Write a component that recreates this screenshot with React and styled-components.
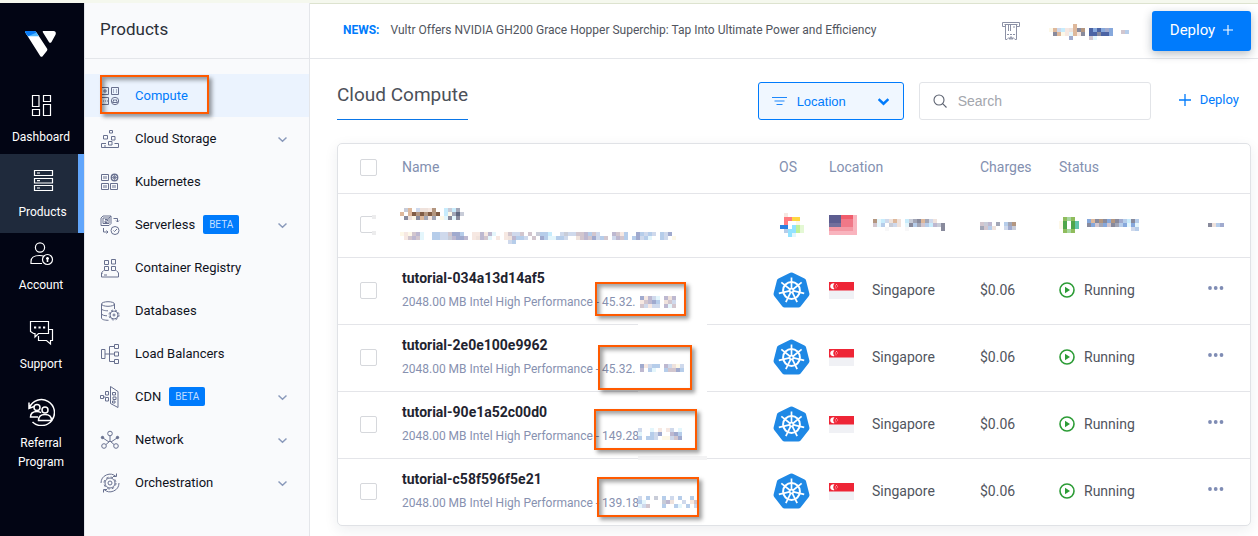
import React from "react";
import styled, { createGlobalStyle, css } from "styled-components";

const GlobalStyle = createGlobalStyle`
  *, *::before, *::after { box-sizing: border-box; }
  body {
    margin: 0;
    background: #fff;
    color: #51555e;
    font-family: Roboto, "Liberation Sans", sans-serif;
    font-size: 14px;
  }
  button, input, select { font-family: inherit; }
  a { text-decoration: none; }
`;

/* ---------- shell ---------- */

const Page = styled.div`
  display: grid;
  grid-template-columns: 84px 226px minmax(0, 1fr);
  min-height: 100vh;
  border-top: 3px solid #f5f8ee;
  box-shadow: inset 0 1px 0 #dde3cf;
`;

const Rail = styled.nav`
  background: #020514;
  color: #fff;
`;

const Logo = styled.a`
  display: flex;
  justify-content: center;
  height: 82px;
  padding: 28px 4px 0 0;
`;

const RailItem = styled.a`
  display: flex;
  flex-direction: column;
  align-items: center;
  gap: 8px;
  min-height: 69px;
  margin-bottom: 10px;
  padding: 7px 2px 0 0;
  color: #fff;
  font-size: 12px;
  line-height: 19px;
  text-align: center;

  ${(p) =>
    p.$active &&
    css`
      min-height: 79px;
      margin-top: -10px;
      margin-bottom: 0;
      padding: 13px 0 0 7px;
      background: #1f2a3c;
      border-right: 6px solid #61a5fb;
    `}
`;

const Sidebar = styled.aside`
  background: #f9fafc;
  border-left: 1px solid #e4e6ea;
  border-right: 1px solid #e4e6ea;
`;

const SidebarTitle = styled.h2`
  height: 56px;
  margin: 0 0 15px;
  padding: 14px 15px 0;
  border-bottom: 1px solid #e4e6ea;
  color: #2b2f38;
  font-size: 17px;
  font-weight: 400;
  line-height: 24px;
`;

const MenuItem = styled.a`
  position: relative;
  display: flex;
  align-items: center;
  height: 43px;
  padding: 0 22px 0 15px;
  background: ${(p) => (p.$active ? "#ebf3fe" : "transparent")};
  color: ${(p) => (p.$active ? "#007bfc" : "#10131c")};
  font-size: 13px;
  line-height: 20px;
`;

const MenuIcon = styled.span`
  display: flex;
  margin-right: 15px;
`;

const MenuArrow = styled.span`
  display: flex;
  margin-left: auto;
  padding-top: 2px;
`;

const Beta = styled.span`
  margin-left: 8px;
  padding: 0 6px;
  border-radius: 2px;
  background: #007bfc;
  color: #c4dfff;
  font-size: 10px;
  line-height: 19px;
`;

const Main = styled.main`
  min-width: 0;
`;

const Header = styled.header`
  display: flex;
  align-items: center;
  height: 56px;
  padding: 0 7px 0 33px;
  border-bottom: 1px solid #e4e6ea;
`;

const News = styled.p`
  flex: 1;
  margin: 0;
  padding-bottom: 2px;
  font-size: 12px;
  line-height: 20px;

  strong { margin-right: 11px; color: #007bfc; font-weight: 700; }
`;

const Account = styled.button`
  display: flex;
  align-items: center;
  gap: 8px;
  margin: 0 23px 0 29px;
  padding: 3px 0 0;
  border: 0;
  background: none;
`;

const PrimaryButton = styled.button`
  display: flex;
  align-items: center;
  justify-content: center;
  gap: 8px;
  width: 99px;
  height: 40px;
  padding: 0 0 2px;
  border: 0;
  border-radius: 3px;
  background: #007bfc;
  box-shadow: 0 3px 10px rgba(20, 40, 60, 0.3);
  color: #fff;
  font-size: 15px;
`;

const Content = styled.section`
  padding: 23px 7px 10px 27px;
`;

const Toolbar = styled.div`
  display: flex;
  align-items: center;
  gap: 15px;
  margin-bottom: 23px;
`;

const PageTitle = styled.h1`
  height: 38px;
  margin: 0 auto 0 0;
  border-bottom: 1px solid #0a76e8;
  color: #4b5059;
  font-size: 19px;
  font-weight: 400;
  line-height: 26px;
`;

const Field = styled.label`
  display: flex;
  align-items: center;
  gap: ${(p) => (p.$active ? "10px" : "11px")};
  width: ${(p) => (p.$active ? "146px" : "232px")};
  height: 38px;
  padding: 0 14px 0 13px;
  border: 1px solid ${(p) => (p.$active ? "#007bfc" : "#e2e4e8")};
  border-radius: 3px;
  background: ${(p) => (p.$active ? "#f0f7ff" : "#fff")};
  svg { flex: none; }
`;

const LocationSelect = styled.select`
  flex: 1;
  min-width: 0;
  padding: 0;
  border: 0;
  outline: 0;
  appearance: none;
  background: none;
  color: #007bfc;
  font-family: "Liberation Sans", Arial, sans-serif;
  font-size: 13px;
`;

const SearchInput = styled.input`
  flex: 1;
  min-width: 0;
  padding: 0;
  border: 0;
  outline: 0;
  background: none;
  font-family: "Liberation Sans", Arial, sans-serif;
  font-size: 14px;
  &::placeholder { color: #a3a6ad; }
`;

const DeployLink = styled.a`
  display: flex;
  align-items: center;
  gap: 9px;
  padding: 0 12px 3px 13px;
  color: #007bfc;
  font-size: 13px;
`;

/* ---------- instance table ---------- */

const Card = styled.div`
  border: 1px solid #e0e2e6;
  border-radius: 5px;
  background: #fff;
  box-shadow: 0 4px 14px rgba(30, 40, 60, 0.08);
`;

const Table = styled.table`
  width: 100%;
  table-layout: fixed;
  border-spacing: 0;

  th, td {
    height: 67px;
    padding: 0 0 2px;
    border-bottom: 1px solid #e4e5e9;
    text-align: left;
    vertical-align: middle;
  }
  th { height: 50px; padding-bottom: 3px; color: #8390b0; font-weight: 400; }
  tbody tr:first-child td { height: 64px; }
  tbody tr:last-child td { height: 66px; border-bottom: 0; }
`;

const Col = styled.col`
  width: ${(p) => p.$w};
`;

const OsHead = styled.span`
  padding-left: 9px;
`;

const CheckWrap = styled.span`
  position: relative;
  display: block;
  width: 17px;
  height: 17px;
  margin-left: 22px;
`;

const Checkbox = styled.input.attrs({ type: "checkbox" })`
  display: block;
  width: 17px;
  height: 17px;
  margin: 0;
  appearance: none;
  border: 1px solid #d6d8dc;
  border-radius: 2px;
  background: #fff;
`;

const NameCell = styled.div`
  position: relative;
  display: flex;
  flex-direction: column;
  gap: ${(p) => (p.$hidden ? "12px" : "4px")};
  height: ${(p) => (p.$hidden ? "61px" : "64px")};
  margin-left: ${(p) => (p.$hidden ? "-2px" : "0")};
  padding-top: ${(p) => (p.$hidden ? "14px" : "10px")};
  line-height: 20px;
`;

const ServerName = styled.a`
  color: #1f2430;
  font-weight: 700;
`;

const Spec = styled.span`
  color: #8791b0;
  font-size: 12px;
  white-space: nowrap;
`;

const Inline = styled.div`
  display: flex;
  align-items: center;
  gap: ${(p) => p.$gap};
  padding-left: ${(p) => p.$indent || "0"};
`;

const MoreButton = styled.button`
  display: block;
  margin-left: 20px;
  padding: 0 0 ${(p) => (p.$low ? "5px" : "10px")};
  border: 0;
  background: none;
`;

/* Things laid over the page: redactions and call-out frames */

const Overlay = styled.span`
  position: absolute;
  left: ${(p) => p.$x}px;
  top: ${(p) => p.$y}px;
  display: flex;
`;

const Callout = styled.span`
  position: absolute;
  left: ${(p) => p.$x}px;
  top: ${(p) => p.$y}px;
  width: ${(p) => p.$w}px;
  height: ${(p) => p.$h}px;
  border: 2px solid #ff5a00;
  box-shadow: 3px 3px 4px rgba(0, 0, 0, 0.38), inset 3px 3px 4px rgba(0, 0, 0, 0.38);
  pointer-events: none;
`;

const Wipe = styled.span`
  position: absolute;
  left: 236px;
  bottom: -4px;
  width: 69px;
  height: 4px;
  background: ${(p) => (p.$grey ? "#f3f3f4" : "#fff")};
`;

const PALETTE = {
  W: "#ffffff", a: "#c8ccd8", b: "#deb89b", c: "#cfd9ec", d: "#efe2dc", e: "#b39680",
  f: "#805c46", g: "#c8ecfc", h: "#888a9c", i: "#a2a6b6", j: "#fdf8e8", k: "#606880",
  l: "#bdb8d0", m: "#b6cdea", n: "#d2c6ce", o: "#a0aace", p: "#e4f6fc", q: "#f6e8e2",
  r: "#ff7a7f", s: "#ffd640", t: "#2a80e0", u: "#92e2ff", v: "#c0f098", w: "#e4f8d4",
  N: "#5d5d90", M: "#736f9c", R: "#f05d6c", S: "#f07888", T: "#f498a4", U: "#f9b4be",
  G: "#8fbc5c", H: "#4fa64a", I: "#62c4ac", J: "#a8d8a0", K: "#4c64a4", L: "#86a8dc",
  X: "#f7f7f8", Z: "#ececed",
};

function Pixels({ rows, label }) {
  const cols = Math.max(...rows.map((r) => r.length));
  return (
    <svg
      width={cols * 4}
      height={rows.length * 4}
      viewBox={`0 0 ${cols} ${rows.length}`}
      shapeRendering="crispEdges"
      role="img"
      aria-label={label || "hidden"}
    >
      {rows.flatMap((row, y) =>
        [...row].map((ch, x) =>
          PALETTE[ch] ? <rect key={`${x}-${y}`} x={x} y={y} width="1" height="1" fill={PALETTE[ch]} /> : null
        )
      )}
    </svg>
  );
}

/* ---------- drawings ---------- */

const RailSvg = ({ children }) => (
  <svg width="28" height="28" viewBox="0 0 28 28" fill="none" stroke="#fff" strokeWidth="1.2">
    {children}
  </svg>
);

const railIcons = {
  dashboard: (
    <RailSvg>
      <path d="M5.500 3.500h6.500v11h-6.500zM16.500 3.500h7v6h-7zM5.500 17.500h7v6h-7zM16.500 12.500h7v11h-7z" />
    </RailSvg>
  ),
  products: (
    <RailSvg>
      <path d="M5.500 3.500h18v5h-18zM5.500 11.500h18v4.500h-18zM5.500 18.500h18v5h-18z" />
      <path d="M8 6h3M8 13.700h3M8 21h3" />
    </RailSvg>
  ),
  account: (
    <RailSvg>
      <circle cx="13" cy="7.500" r="4.600" />
      <path d="M15 23.500H4v-2c0-4.500 4-6 8.500-6 2 0 3.500.3 4.500 1" />
      <circle cx="20.500" cy="19.500" r="5" />
      <path d="M20.500 17v5M19 18.500h3" strokeWidth="1.600" />
    </RailSvg>
  ),
  support: (
    <RailSvg>
      <path d="M3.500 2.500h18v12h-10l-3.500 3.500v-3.500h-1.500l-3-2z" />
      <path d="M21.500 10.500h4v11h-2v3.500l-4-3.500h-8v-4.500" />
      <path d="M7 8.500h2.200M11.500 8.500h2.200M16 8.500h2.200" strokeWidth="2.200" />
    </RailSvg>
  ),
  referral: (
    <RailSvg>
      <path d="M2.500 9.500a13 13 0 1 1 3 14.500M2 4.500v6l5-2" strokeWidth="1.500" />
      <circle cx="10" cy="9.500" r="3" strokeWidth="1.500" />
      <circle cx="18" cy="12" r="3" strokeWidth="1.500" />
      <path d="M11 19H3.500c0-4 2-5.500 6.500-5.500 2 0 3 .3 4 1.300M11.500 22.500c0-4.500 2-6 6.500-6s6.500 1.500 6.500 6z" strokeWidth="1.500" />
    </RailSvg>
  ),
};

const MenuSvg = ({ children }) => (
  <svg width="20" height="22" viewBox="0 0 20 22" fill="none" stroke="#68708f" strokeWidth="1">
    {children}
  </svg>
);

const menuIcons = {
  compute: (
    <MenuSvg>
      <path d="M1.500 2.500h7v7h-7zM11.500 2.500h7v7h-7zM1.500 12.500h7v7h-7z" />
      <path d="M4 5h2v2h-2zM3 16h1M5 16h1M7 16h1M13 5h1M16 5h1M13 7h1M16 7h1M12.500 17.500h5l-1.500-3-1 1-1-1z" />
      <circle cx="15" cy="16" r="3.700" />
    </MenuSvg>
  ),
  storage: (
    <MenuSvg>
      <path d="M9.500 2.500h3v2.500h-3zM3.500 7.500h4v3.500h-4zM11.500 8.500h3.500v3.500h-3.500zM8.500 13.500h3.500v3.500h-3.500zM6 15.500H1.500v4h17v-4H14.500M4 18h2" />
    </MenuSvg>
  ),
  kubernetes: (
    <MenuSvg>
      <path d="M1.500 3.500h7v6h-7zM1.500 12.500h7v6h-7zM10.500 12.500h7v6h-7zM4 5v3M6 5v3M4 14v3M6 14v3M13 14v3M15 14v3" />
      <circle cx="14.500" cy="6.500" r="3.200" strokeWidth="1.400" />
      <path d="M14.500 4v5M12 6.500h5M13 5l3 3M16 5l-3 3" strokeWidth=".8" />
    </MenuSvg>
  ),
  serverless: (
    <MenuSvg>
      <path d="M1 4l2-2h8v7.500l-2 2H1zM3 4v5.500h6V4zM9 4l2-2M5 5.500h2.500v1.500H5v1.500h2.500M13.500 4.500h4V8M16 6.500l1.500 1.500 1.500-1.500M3.500 14v4H8M6.500 16.500l1.500 1.500-1.500 1.500" />
      <circle cx="15" cy="16.500" r="4" />
      <path d="M13.500 16.500l1 1 2.500-2.500" />
    </MenuSvg>
  ),
  registry: (
    <MenuSvg>
      <path d="M4.500 3.500h4v4h-4zM11.500 2.500h4v4.500h-4zM4.500 9.500h4v4h-4zM11.500 9.500h4v4h-4zM3.500 13.500l-2 2.500v4h17v-4l-2-2.500M1.500 16.500h1M4 18h3" />
    </MenuSvg>
  ),
  databases: (
    <MenuSvg>
      <ellipse cx="8" cy="4" rx="6.500" ry="2.300" />
      <path d="M1.500 4v14c0 1.500 3 2.300 7 2.300M14.500 4v5M1.500 8.500c0 1.500 3 2.300 6.500 2.300M1.500 13.500c0 1.500 3 2.300 5.500 2.300" />
      <circle cx="14" cy="15" r="4" />
      <circle cx="14" cy="15" r="5" strokeDasharray="2 2" />
      <circle cx="14" cy="15" r="1" />
    </MenuSvg>
  ),
  balancers: (
    <MenuSvg>
      <path d="M1.500 6.500h3.500v9h-3.500zM5 11h10M14.500 3.500h-5v15h5M14.500 1.500h4v4h-4zM14.500 9h4v4h-4zM14.500 16.500h4v4h-4z" />
    </MenuSvg>
  ),
  cdn: (
    <MenuSvg>
      <path d="M10.500 0.500l7.500 5v16l-7.500-4zM.5 9.500h3v3h-3zM5.500 5.500h3v3.500h-3zM5.500 11.500h3v3.500h-3zM12.500 6.500h3v2.500h-3zM13 11h3v2.500h-3zM12.500 15h2.500v2h-2.500zM3.500 11h2" />
    </MenuSvg>
  ),
  network: (
    <MenuSvg>
      <circle cx="10" cy="4.500" r="2.300" />
      <circle cx="4" cy="17" r="2.300" />
      <circle cx="16" cy="17" r="2.300" />
      <circle cx="2.500" cy="8.500" r="1.200" fill="#68708f" />
      <circle cx="17.500" cy="8.500" r="1.200" fill="#68708f" />
      <path d="M10 7v5l-4 3.500M10 12l4 3.500M3 9l6 4M17 9l-6 4" />
    </MenuSvg>
  ),
  orchestration: (
    <MenuSvg>
      <circle cx="10" cy="11" r="5" />
      <circle cx="10" cy="11" r="6" strokeDasharray="2.500 2.200" />
      <circle cx="10" cy="11" r="2" />
      <path d="M1 11a9 9 0 0 1 15-6.500M13 4.500h3.500V1.500M19 11a9 9 0 0 1-15 6.500M7 17.500H3.500v3" />
    </MenuSvg>
  ),
};

const Chevron = ({ color = "#8a9abb", size = 9, weight = 1.5 }) => (
  <svg width={size} height={size} viewBox="0 0 9 9" fill="none" stroke={color} strokeWidth={weight}>
    <path d="M.5 2.500L4.500 6.300 8.500 2.500" />
  </svg>
);

const Plus = ({ size = 10, color = "currentColor" }) => (
  <svg width={size} height={size} viewBox="0 0 12 12" fill="none" stroke={color} strokeWidth="1.300">
    <path d="M6 0v12M0 6h12" />
  </svg>
);

const VultrLogo = () => (
  <svg width="31" height="26" viewBox="0 0 31 26">
    <path d="M0 0h9q1.500 0 2.500 1.500L22 17.500q.7 1 0 2.200L17.800 25q-1.300 1.700-2.600 0L.3 1.500Q-.3.400 0 0z" fill="#fff" />
    <path d="M0 0h9q1.500 0 2.500 1.500L14 5.200H3L.3 1.500Q-.3.400 0 0z" fill="#51b9ff" />
    <path d="M0 0h9q1.300 0 2 .8L11.500 1.500 3 5.200.3 1.500Q-.3.400 0 0z" fill="#0a7cf5" />
    <path d="M18 0h10.500q2.500 0 2.300 2.500 0 1-.7 2L26.500 11q-1.300 1.700-2.600 0L18 1.500Q17.300.5 18 0z" fill="#fff" />
  </svg>
);

const BillingIcon = () => (
  <svg width="18" height="18" viewBox="0 0 18 18" fill="none" stroke="#8c91a5" strokeWidth="1">
    <path d="M3.500 4.500H.5v-4h17v4H14.500M2.500 2.500h13M3.500 2.500v15h1.500l2-2 1 2M14.500 2.500v15h-1.500l-2-2-1 2M8 17.500l1-3 1 3M6.500 3v6M8.500 3v6" />
    <path d="M12 4v2M5 12.500h8" strokeDasharray="2 1" />
  </svg>
);

const FilterIcon = () => (
  <svg width="15" height="10" viewBox="0 0 15 10" fill="none" stroke="#1e88fb" strokeWidth="1">
    <path d="M0 1.500h15M2.500 5h10M4.500 8.500h6" />
  </svg>
);

const SearchIcon = () => (
  <svg width="14" height="14" viewBox="0 0 14 14" fill="none" stroke="#5c6270" strokeWidth="1.100">
    <circle cx="6" cy="6" r="5" />
    <path d="M9.600 9.600L13.500 13.500" />
  </svg>
);

const SPOKES = [0, 1, 2, 3, 4, 5, 6].map((i) => (i * 360) / 7);

const KubernetesLogo = () => (
  <svg width="37" height="36" viewBox="0 0 37 36" role="img" aria-label="Kubernetes">
    <path
      d="M17.200 .8q1.300-.6 2.600 0L31.500 6.400q1.300.6 1.600 2l3.300 13.100q.3 1.300-.6 2.400L27.600 34.500q-.9 1-2.200 1H11.600q-1.300 0-2.200-1L1.200 23.900q-.9-1.100-.6-2.400l3.300-13.100q.3-1.400 1.600-2z"
      fill="#1e88e5"
    />
    <g stroke="#fff" fill="none">
      <circle cx="18.500" cy="18.500" r="8.400" strokeWidth="2" />
      {SPOKES.map((a) => (
        <path key={a} d="M18.500 16.500V5.500" strokeWidth="1.700" transform={`rotate(${a} 18.500 18.500)`} />
      ))}
      <circle cx="18.500" cy="18.500" r="1.900" strokeWidth="1.800" />
    </g>
  </svg>
);

const SingaporeFlag = () => (
  <svg width="25" height="17" viewBox="0 0 25 17" role="img" aria-label="Singapore flag">
    <path d="M0 0h25v17H0z" fill="#f0f1f5" />
    <path d="M0 0h25v8.500H0z" fill="#ee2536" />
    <path d="M5.500 1.500a3 3 0 1 0 0 5.400 3.500 3.500 0 0 1 0-5.400z" fill="#fff" />
    <path d="M7 2.500h1M6 4h1M8 4h1M6.500 5.800h1" stroke="#ffc3c8" strokeWidth=".9" />
  </svg>
);

const RunningIcon = () => (
  <svg width="16" height="16" viewBox="0 0 16 16">
    <circle cx="8" cy="8" r="7" fill="none" stroke="#2c9c36" strokeWidth="1.600" />
    <path d="M6 4.800L11 8l-5 3.200z" fill="#2c9c36" />
  </svg>
);

const Dots = () => (
  <svg width="16" height="4" viewBox="0 0 16 4" fill="#7f8cb4">
    <circle cx="2" cy="2" r="1.900" />
    <circle cx="7.700" cy="2" r="1.900" />
    <circle cx="13.500" cy="2" r="1.900" />
  </svg>
);

/* ---------- data ---------- */

const railItems = [
  { icon: "dashboard", label: "Dashboard" },
  { icon: "products", label: "Products", active: true },
  { icon: "account", label: "Account" },
  { icon: "support", label: "Support" },
  { icon: "referral", label: "Referral Program" },
];

const menu = [
  { icon: "compute", label: "Compute", active: true },
  { icon: "storage", label: "Cloud Storage", open: true },
  { icon: "kubernetes", label: "Kubernetes" },
  { icon: "serverless", label: "Serverless", beta: true, open: true },
  { icon: "registry", label: "Container Registry" },
  { icon: "databases", label: "Databases" },
  { icon: "balancers", label: "Load Balancers" },
  { icon: "cdn", label: "CDN", beta: true, open: true },
  { icon: "network", label: "Network", open: true },
  { icon: "orchestration", label: "Orchestration", open: true },
];

const servers = [
  {
    name: "tutorial-034a13d14af5", ip: "45.32.", frame: [193, 24, 91, 34], wipe: "white",
    mask: ["oqlcp.ldl", "qnlom.dnc", "ncqcc.lpn"], maskAt: [238, 38],
  },
  {
    name: "tutorial-2e0e100e9962", ip: "45.32.", frame: [196, 20, 94, 45], wipe: "white",
    mask: ["oqcmm.lcdjc", "l.mp..mnnom"], maskAt: [238, 39],
  },
  {
    name: "tutorial-90e1a52c00d0", ip: "149.28", frame: [192, 17, 103, 41], wipe: "grey",
    mask: ["c..p.q.qc.p", "p..mco..lom", "m.mmc.jjcno"], maskAt: [236, 36],
  },
  {
    name: "tutorial-c58f596f5e21", ip: "139.18", frame: [195, 18, 102, 40],
    mask: ["cWmWaWmWcWmWWmW", "mp....aldW.cWqn", "pcn...mW.mpWm.c"], maskAt: [236, 37],
  },
];

/* ---------- page ---------- */

function ServerRow({ server }) {
  const [x, y, w, h] = server.frame;
  const [maskX, maskY] = server.maskAt;
  return (
    <tr>
      <td>
        <CheckWrap><Checkbox aria-label={`Select ${server.name}`} /></CheckWrap>
      </td>
      <td>
        <NameCell>
          <ServerName href="#server">{server.name}</ServerName>
          <Spec>2048.00 MB Intel High Performance - {server.ip}</Spec>
          <Overlay $x={maskX} $y={maskY}><Pixels rows={server.mask} /></Overlay>
          {server.wipe && <Wipe $grey={server.wipe === "grey"} />}
          <Callout $x={x} $y={y} $w={w} $h={h} />
        </NameCell>
      </td>
      <td><Inline $indent="3px"><KubernetesLogo /></Inline></td>
      <td><Inline $gap="18px"><SingaporeFlag />Singapore</Inline></td>
      <td>$0.06</td>
      <td><Inline $gap="9px"><RunningIcon />Running</Inline></td>
      <td><MoreButton aria-label="More"><Dots /></MoreButton></td>
    </tr>
  );
}

function HiddenRow() {
  return (
    <tr>
      <td>
        <CheckWrap>
          <Checkbox aria-label="Select server" />
          <Overlay $x={12} $y={-1}><Pixels rows={["ZW", "WW", "WW", "WW", "ZW"]} /></Overlay>
        </CheckWrap>
      </td>
      <td>
        <NameCell $hidden>
          <Pixels rows={[".ab.cddqe..gagi.", "b.bfefefef.gjika", ".hdjhbiqi.jphph."]} />
          <Pixels
            rows={[
              "jqjnlp..mmccnoom..qqlqlp..qnccn.n.ammg..caccnnlmnc...lnqm..omcmc.mco..jqn",
              ".qnlnp..mmccalool.qdlnp.q.qdlmmc.n.omppmmc..dnlnocmn.clnm.mocmp..mc.jqnn",
              "...........................cm",
            ].map((r) => r.slice(0, 69))}
          />
        </NameCell>
      </td>
      <td>
        <Inline $indent="10px">
          <Pixels rows={[".q....", ".rrss.", ".rW.j.", "tt.uvw", ".muuvw", "..up.."]} label="OS" />
        </Inline>
      </td>
      <td>
        <Inline $gap="16px">
          <Pixels rows={["NNNRRRU", "NNNSSSU", "MMMSSSU", "TTTTTTU", "UUUUUUU"]} label="Flag" />
          <Pixels rows={["epgcdbd.gaihbicd..", "npmWacd.phminmglah", "...X....X........h"]} />
        </Inline>
      </td>
      <td><Pixels rows={["nalWi.mie", "inmdW.coa"]} /></td>
      <td>
        <Inline $gap="8px">
          <Pixels rows={[".GJG.", "jHWHI", "jHWHI", ".GJG."]} label="State" />
          <Pixels rows={["LbhehLehomghm", "hLniLnhimLpLp", "...........cm"]} />
        </Inline>
      </td>
      <td><MoreButton $low aria-label="More"><Pixels rows={["hdmo"]} /></MoreButton></td>
    </tr>
  );
}

export default function App() {
  return (
    <Page>
      <GlobalStyle />
      <Rail>
        <Logo href="#home" aria-label="Vultr"><VultrLogo /></Logo>
        {railItems.map((item) => (
          <RailItem key={item.label} href="#rail" $active={item.active}>
            {railIcons[item.icon]}
            {item.label}
          </RailItem>
        ))}
      </Rail>

      <Sidebar>
        <SidebarTitle>Products</SidebarTitle>
        {menu.map((item) => (
          <MenuItem key={item.label} href="#menu" $active={item.active}>
            <MenuIcon>{menuIcons[item.icon]}</MenuIcon>
            {item.label}
            {item.beta && <Beta>BETA</Beta>}
            {item.active && <Callout $x={15} $y={1} $w={109} $h={39} />}
            {item.open && <MenuArrow><Chevron /></MenuArrow>}
          </MenuItem>
        ))}
      </Sidebar>

      <Main>
        <Header>
          <News>
            <strong>NEWS:</strong>
            Vultr Offers NVIDIA GH200 Grace Hopper Superchip: Tap Into Ultimate Power and Efficiency
          </News>
          <BillingIcon />
          <Account aria-label="Account menu">
            <Pixels rows={["......b.........", "jbcgqdbhe.KLKLoL", ".hbjqpbqh.KKhKKL", ".....o....np...."]} />
            <Pixels rows={["nm"]} />
          </Account>
          <PrimaryButton>Deploy <Plus /></PrimaryButton>
        </Header>

        <Content>
          <Toolbar>
            <PageTitle>Cloud Compute</PageTitle>
            <Field $active>
              <FilterIcon />
              <LocationSelect aria-label="Location">
                <option>Location</option>
              </LocationSelect>
              <Chevron color="#007bfc" size={11} weight={2} />
            </Field>
            <Field>
              <SearchIcon />
              <SearchInput type="search" placeholder="Search" aria-label="Search" />
            </Field>
            <DeployLink href="#deploy"><Plus size={12} /> Deploy</DeployLink>
          </Toolbar>

          <Card>
            <Table>
              <colgroup>
                <Col $w="64px" />
                <Col $w="auto" />
                <Col $w="59px" />
                <Col $w="151px" />
                <Col $w="79px" />
                <Col $w="129px" />
                <Col $w="62px" />
              </colgroup>
              <thead>
                <tr>
                  <th><CheckWrap><Checkbox aria-label="Select all" /></CheckWrap></th>
                  <th>Name</th>
                  <th><OsHead>OS</OsHead></th>
                  <th>Location</th>
                  <th>Charges</th>
                  <th>Status</th>
                  <th aria-label="Actions" />
                </tr>
              </thead>
              <tbody>
                <HiddenRow />
                {servers.map((server) => (
                  <ServerRow key={server.name} server={server} />
                ))}
              </tbody>
            </Table>
          </Card>
        </Content>
      </Main>
    </Page>
  );
}
